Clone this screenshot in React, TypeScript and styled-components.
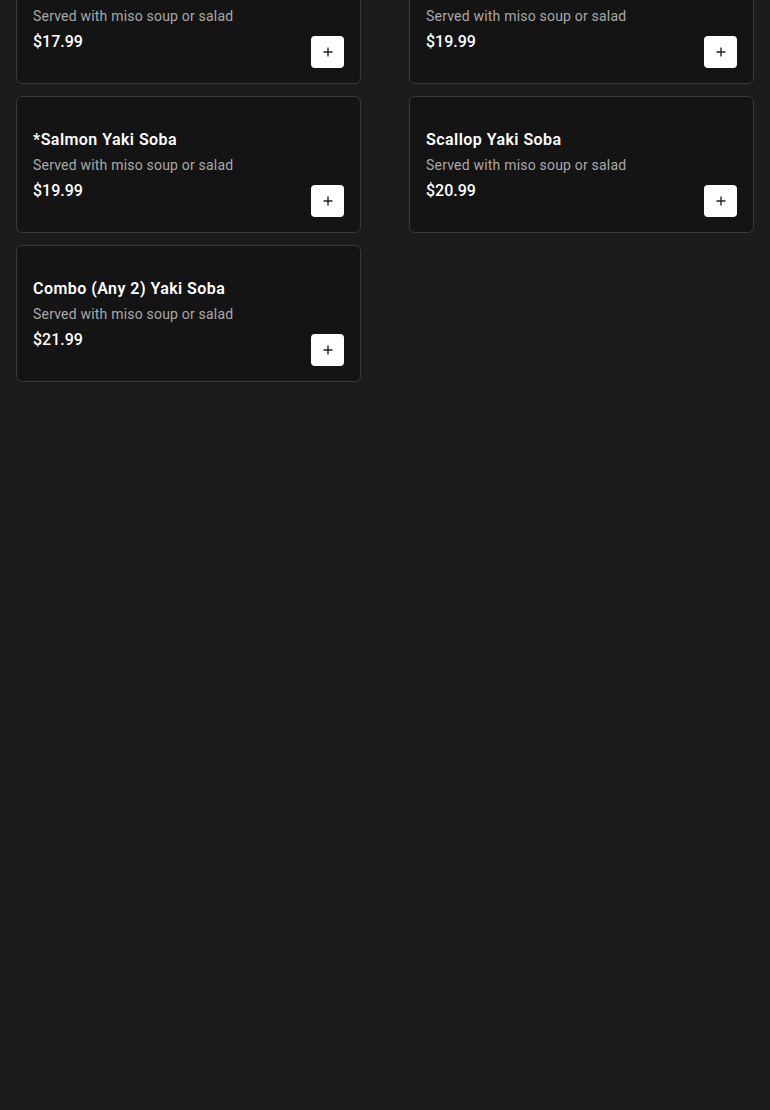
import React from "react";
import styled, { createGlobalStyle } from "styled-components";

const GlobalStyle = createGlobalStyle`
    html, body {
        margin: 0;
        padding: 0;
        background: #1c1c1c;
        font-family: Roboto, "Liberation Sans", sans-serif;
        color: #ffffff;
    }
`;

const Page = styled.div`
    min-height: 1110px;
    background: #1c1c1c;
    overflow: hidden;
`;

// the view is scrolled, the first row is partly above the top edge
const MenuGrid = styled.div`
    display: grid;
    grid-template-columns: 1fr 1fr;
    column-gap: 48px;
    row-gap: 12px;
    padding: 0 16px;
    margin-top: -53px;
`;

const Card = styled.div`
    display: flex;
    flex-flow: row;
    align-items: flex-end;
    justify-content: space-between;
    background: #141414;
    border: 1px solid #3a3a3a;
    border-radius: 6px;
    padding: 31px 16px 15px 16px;
    height: 137px;
    box-sizing: border-box;
`;

const Info = styled.div`
    display: flex;
    flex-flow: column;
    align-self: flex-start;
`;

const Title = styled.div`
    font-size: 16px;
    font-weight: 600;
    line-height: 24px;
    letter-spacing: 0.45px;
    color: #ffffff;
`;

const Description = styled.div`
    font-size: 14px;
    line-height: 22px;
    letter-spacing: 0.2px;
    color: #a8a8a8;
    margin-top: 2px;
`;

const Price = styled.div`
    font-size: 16px;
    font-weight: 500;
    line-height: 24px;
    color: #ffffff;
    margin-top: 3px;
`;

const AddButton = styled.button`
    display: flex;
    align-items: center;
    justify-content: center;
    width: 33px;
    height: 32px;
    padding: 0;
    border: none;
    border-radius: 4px;
    background: #ffffff;
    color: #222222;
    cursor: pointer;
`;

const PlusIcon: React.FC = () => (
    <svg width="10" height="10" viewBox="0 0 10 10">
        <path d="M5 0.5v9M0.5 5h9" stroke="currentColor" strokeWidth="1.4" fill="none" />
    </svg>
);

type Item = { name: string; description: string; price: string };

const items: Item[] = [
    { name: "Chicken Yaki Soba", description: "Served with miso soup or salad", price: "$17.99" },
    { name: "*Shrimp Yaki Soba", description: "Served with miso soup or salad", price: "$19.99" },
    { name: "*Salmon Yaki Soba", description: "Served with miso soup or salad", price: "$19.99" },
    { name: "Scallop Yaki Soba", description: "Served with miso soup or salad", price: "$20.99" },
    { name: "Combo (Any 2) Yaki Soba", description: "Served with miso soup or salad", price: "$21.99" },
];

const App: React.FC = () => {
    return (
        <Page>
            <GlobalStyle />
            <MenuGrid>
                {items.map((item) => (
                    <Card key={item.name}>
                        <Info>
                            <Title>{item.name}</Title>
                            <Description>{item.description}</Description>
                            <Price>{item.price}</Price>
                        </Info>
                        <AddButton aria-label={`Add ${item.name}`}>
                            <PlusIcon />
                        </AddButton>
                    </Card>
                ))}
            </MenuGrid>
        </Page>
    );
};

export default App;
